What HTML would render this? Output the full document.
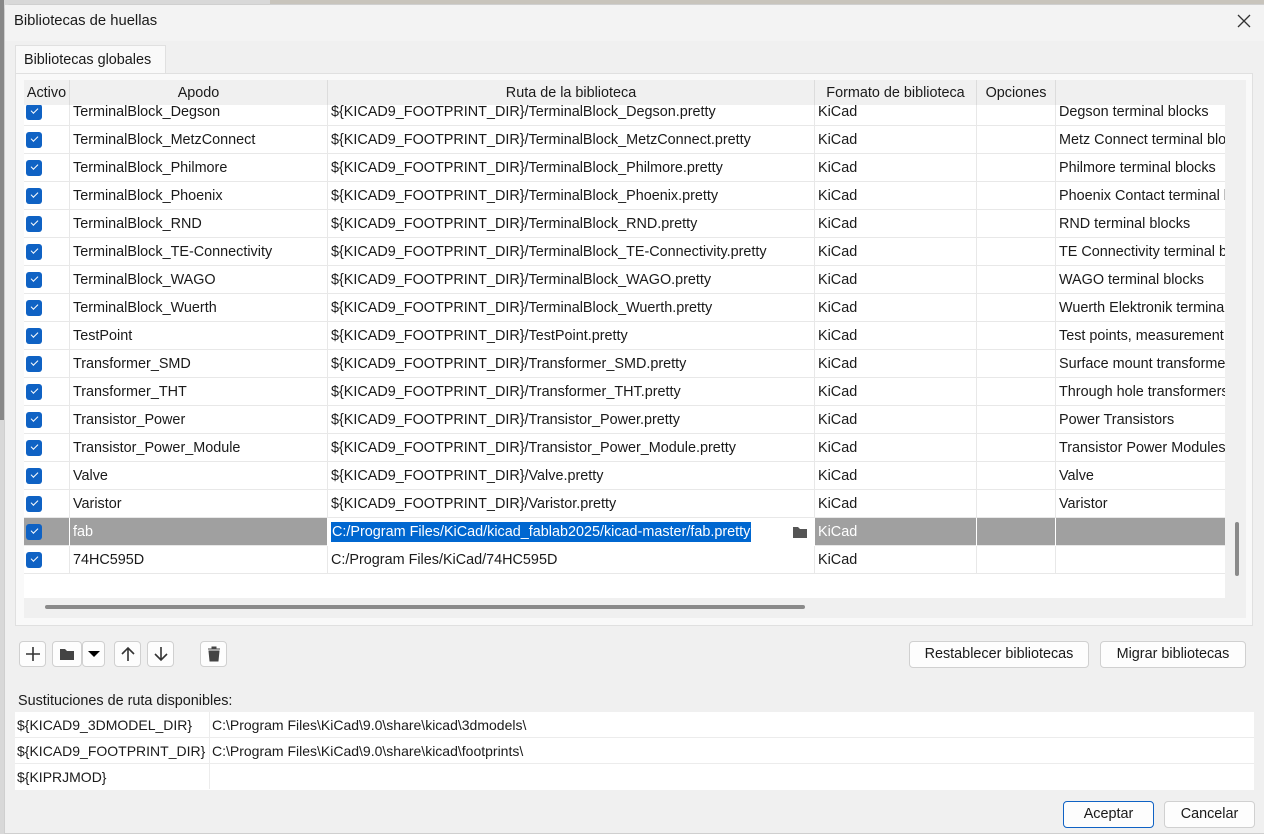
<!DOCTYPE html>
<html><head><meta charset="utf-8"><style>
*{box-sizing:border-box;margin:0;padding:0}
body{width:1264px;height:828px;overflow:hidden;background:#d8d8d8;font-family:"Liberation Sans",sans-serif;font-size:14.4px;color:#1a1a1a;position:relative}
.a{position:absolute}
#dlg{left:4px;top:4px;width:1262px;height:830px;background:#f0f0f0;border:1px solid #cfcfcf;border-radius:7px 0 0 0;overflow:hidden}
.row{position:absolute;left:24px;width:1201px;height:28px;background:#fff;border-bottom:1px solid #e8e8e8}
.row div{position:absolute;top:0;height:28px;line-height:29px;white-space:nowrap;overflow:hidden;border-right:1px solid #e8e8e8;padding-left:3px}
.c0{left:0;width:46px}.c1{left:46px;width:258px}.c2{left:304px;width:487px}.c3{left:791px;width:162px}.c4{left:953px;width:79px}.c5{left:1032px;width:169px;border-right:none!important}
.cb{position:absolute;left:2px;top:6px;width:16px;height:16px;background:#0f62c4;border-radius:3px}
.cb:after{content:"";position:absolute;left:5px;top:4px;width:6px;height:3px;border-left:1.3px solid #fff;border-bottom:1.3px solid #fff;transform:rotate(-45deg)}
.sel{background:#a0a0a0!important}.sel div{color:#fff;border-right-color:#fff}
.hd{position:absolute;top:80px;height:25px;line-height:26px;background:#f0f0f0;border-right:1px solid #dcdcdc;text-align:center;color:#1a1a1a}
.btn{position:absolute;background:#fdfdfd;border:1px solid #d0d0d0;border-radius:4px;text-align:center;line-height:25px;color:#1a1a1a}
.sr{position:absolute;left:15px;width:1239px;height:26px;background:#fff;border-bottom:1px solid #ececec;line-height:26px;font-size:14px}
.sr span{position:absolute;top:0}
</style></head><body>
<div class="a" style="left:0;top:0;width:4px;height:420px;background:#888"></div>
<div class="a" style="left:270px;top:0;width:1000px;height:4px;background:#c8c4bc"></div>
<div id="dlg" class="a"></div>
<div class="a" style="left:5px;top:5px;width:1259px;height:36px;background:#f3f3f3"></div>
<div class="a" style="left:14px;top:13px;font-size:14.8px">Bibliotecas de huellas</div>
<svg class="a" style="left:1237px;top:14px" width="14" height="14"><path d="M1 1L13 13M13 1L1 13" stroke="#333" stroke-width="1.3"/></svg>
<div class="a" style="left:15px;top:45px;width:151px;height:29px;background:#f9f9f9;border:1px solid #e0e0e0;border-bottom:none;line-height:28px;padding-left:8px">Bibliotecas globales</div>
<div class="a" style="left:15px;top:73px;width:1238px;height:553px;background:#f9f9f9;border:1px solid #e0e0e0"></div>
<div class="a" style="left:24px;top:80px;width:1222px;height:538px;background:#f0f0f0"></div>
<div class="a" style="left:24px;top:80px;width:1201px;height:518px;background:#fff"></div>
<div id="rows"></div>
<div class="hd" style="left:24px;width:46px">Activo</div>
<div class="hd" style="left:70px;width:258px">Apodo</div>
<div class="hd" style="left:328px;width:487px">Ruta de la biblioteca</div>
<div class="hd" style="left:815px;width:162px">Formato de biblioteca</div>
<div class="hd" style="left:977px;width:79px">Opciones</div>
<div class="hd" style="left:1056px;width:169px;border-right:none"></div>
<div class="a" style="left:24px;top:598px;width:1201px;height:20px;background:#f0f0f0"></div>
<div class="a" style="left:45px;top:605px;width:760px;height:4px;background:#8a8a8a;border-radius:2px"></div>
<div class="a" style="left:1235px;top:522px;width:4px;height:54px;background:#8a8a8a;border-radius:2px"></div>

<div class="btn" style="left:19px;top:641px;width:27px;height:26px"><svg width="16" height="16" style="margin-top:4px"><path d="M8 1V15M1 8H15" stroke="#333" stroke-width="1.6"/></svg></div>
<div class="btn" style="left:52px;top:641px;width:30px;height:26px"><svg width="16" height="14" style="margin-top:5px"><path d="M1 2h5l2 2h7v9H1z" fill="#444"/></svg></div>
<div class="btn" style="left:82px;top:641px;width:23px;height:26px"><svg width="12" height="8" style="margin-top:8px"><path d="M0 1h12L6 7z" fill="#000"/></svg></div>
<div class="btn" style="left:114px;top:641px;width:27px;height:26px"><svg width="16" height="16" style="margin-top:4px"><path d="M8 15V2M2 8l6-6 6 6" stroke="#333" stroke-width="1.6" fill="none"/></svg></div>
<div class="btn" style="left:147px;top:641px;width:27px;height:26px"><svg width="16" height="16" style="margin-top:4px"><path d="M8 1v13M2 8l6 6 6-6" stroke="#333" stroke-width="1.6" fill="none"/></svg></div>
<div class="btn" style="left:200px;top:641px;width:27px;height:26px"><svg width="14" height="16" style="margin-top:4px"><path d="M1 3h12M5 3V1h4v2M2 5h10l-1 10H3z" fill="#444" stroke="#444" stroke-width="1"/></svg></div>
<div class="btn" style="left:909px;top:641px;width:180px;height:27px">Restablecer bibliotecas</div>
<div class="btn" style="left:1100px;top:641px;width:146px;height:27px">Migrar bibliotecas</div>

<div class="a" style="left:18px;top:693px">Sustituciones de ruta disponibles:</div>
<div class="sr" style="top:712px"><span style="left:2px">${KICAD9_3DMODEL_DIR}</span><span style="left:197px">C:\Program Files\KiCad\9.0\share\kicad\3dmodels\</span></div>
<div class="sr" style="top:738px"><span style="left:2px">${KICAD9_FOOTPRINT_DIR}</span><span style="left:197px">C:\Program Files\KiCad\9.0\share\kicad\footprints\</span></div>
<div class="sr" style="top:764px;border-bottom:none"><span style="left:2px">${KIPRJMOD}</span></div>
<div class="a" style="left:209px;top:712px;width:1px;height:77px;background:#ececec"></div>
<div class="btn" style="left:1063px;top:801px;width:91px;height:27px;border-color:#0f62c4">Aceptar</div>
<div class="btn" style="left:1164px;top:801px;width:91px;height:27px">Cancelar</div>
<script>
var d=[["TerminalBlock_Degson","Degson terminal blocks"],["TerminalBlock_MetzConnect","Metz Connect terminal blocks"],["TerminalBlock_Philmore","Philmore terminal blocks"],["TerminalBlock_Phoenix","Phoenix Contact terminal blocks"],["TerminalBlock_RND","RND terminal blocks"],["TerminalBlock_TE-Connectivity","TE Connectivity terminal blocks"],["TerminalBlock_WAGO","WAGO terminal blocks"],["TerminalBlock_Wuerth","Wuerth Elektronik terminal blocks"],["TestPoint","Test points, measurement"],["Transformer_SMD","Surface mount transformers"],["Transformer_THT","Through hole transformers"],["Transistor_Power","Power Transistors"],["Transistor_Power_Module","Transistor Power Modules"],["Valve","Valve"],["Varistor","Varistor"]];
var h="";
d.forEach(function(r,i){h+='<div class="row" style="top:'+(98+28*i)+'px"><div class="c0"><span class="cb"></span></div><div class="c1">'+r[0]+'</div><div class="c2">${KICAD9_FOOTPRINT_DIR}/'+r[0]+'.pretty</div><div class="c3">KiCad</div><div class="c4"></div><div class="c5">'+r[1]+'</div></div>';});
h+='<div class="row sel" style="top:518px"><div class="c0"><span class="cb"></span></div><div class="c1">fab</div><div class="c2" style="background:#fff;color:#000"><span style="background:#0067d0;color:#fff;padding:2px 1px">C:/Program Files/KiCad/kicad_fablab2025/kicad-master/fab.pretty</span><svg style="position:absolute;left:465px;top:8px" width="14" height="12"><path d="M0 1h5l2 2h7v9H0z" fill="#555"/></svg></div><div class="c3">KiCad</div><div class="c4"></div><div class="c5"></div></div>';
h+='<div class="row" style="top:546px"><div class="c0"><span class="cb"></span></div><div class="c1">74HC595D</div><div class="c2">C:/Program Files/KiCad/74HC595D</div><div class="c3">KiCad</div><div class="c4"></div><div class="c5"></div></div>';
document.getElementById("rows").innerHTML=h;
</script>
</body></html>
